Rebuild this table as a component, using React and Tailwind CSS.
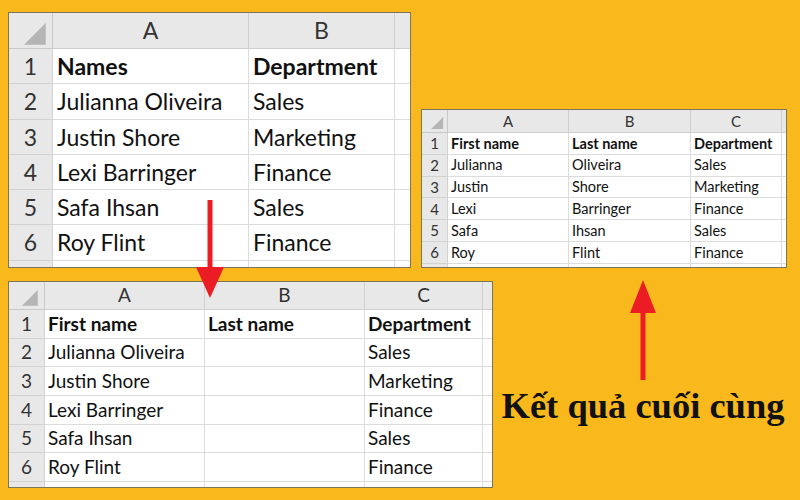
import React from 'react';

// one Excel-like sheet: corner cell, column letters, numbered rows, a sliver of the next row
const Sheet = ({ size, grid, letters, rows, headH, rowH, tailH, text, numText, pad }) => (
  <div className={`shrink-0 bg-white border border-[#7d7558] overflow-hidden ${size}`}
    style={{ fontFamily: 'Lato, "Open Sans", sans-serif' }}>
    <div className={`grid ${grid}`}>
      <div className={`flex items-end justify-end p-[3px] bg-[#e8e8e8] border-r border-b border-[#c9c9c9] ${headH}`}>
        <svg viewBox="0 0 10 10" className="w-[75%] h-[75%]">
          <polygon points="10,0 10,10 0,10" fill="#b5b5b5" />
        </svg>
      </div>
      {letters.map((l, i) => (
        <div key={'h' + i} className={`flex items-center justify-center bg-[#e8e8e8] border-r border-b border-[#cfcfcf] text-[#333] ${headH} ${numText}`}>
          {l}
        </div>
      ))}
      {rows.map((r, ri) => (
        <React.Fragment key={ri}>
          <div className={`flex items-center justify-center bg-[#e8e8e8] border-r border-b border-[#d2d2d2] text-[#333] ${rowH} ${numText}`}>
            {ri + 1}
          </div>
          {r.map((c, ci) => (
            <div key={ci} className={`flex items-center border-r border-b border-[#dcdcdc] text-[#111] whitespace-nowrap ${pad} ${rowH} ${text} ${ri === 0 ? 'font-bold' : ''}`}>
              {c}
            </div>
          ))}
        </React.Fragment>
      ))}
      <div className={`bg-[#e8e8e8] border-r border-[#d2d2d2] ${tailH}`} />
      {letters.map((l, i) => (
        <div key={'t' + i} className={`border-r border-[#dcdcdc] ${tailH}`} />
      ))}
    </div>
  </div>
);

const UpArrow = () => (
  <svg width="30" height="100" viewBox="0 0 30 100" className="shrink-0">
    <rect x="12.5" y="28" width="5" height="72" fill="#ec1c24" />
    <polygon points="15,0 28,33 2,33" fill="#ec1c24" />
  </svg>
);

export default function App() {
  const names = ['Julianna Oliveira', 'Justin Shore', 'Lexi Barringer', 'Safa Ihsan', 'Roy Flint'];
  const depts = ['Sales', 'Marketing', 'Finance', 'Sales', 'Finance'];
  const first = ['Julianna', 'Justin', 'Lexi', 'Safa', 'Roy'];
  const last = ['Oliveira', 'Shore', 'Barringer', 'Ihsan', 'Flint'];

  return (
    <div className="relative flex gap-[10px] w-[800px] h-[500px] pl-[8px] pt-[12px] bg-[#f9b91c] overflow-hidden">
      {/* left: original sheet above, sheet with the new column below */}
      <div className="flex flex-col gap-[13px] w-[403px] shrink-0">
        <Sheet
          size="w-[403px] h-[256px]"
          grid="grid-cols-[44px_196px_146px_17px]"
          letters={['A', 'B', '']}
          rows={[['Names', 'Department', ''], ...names.map((n, i) => [n, depts[i], ''])]}
          headH="h-[36px]"
          rowH="h-[35.3px]"
          tailH="h-[8px]"
          text="text-[23px]"
          numText="text-[23px]"
          pad="pl-[4px]"
        />
        <Sheet
          size="w-[485px] h-[207px]"
          grid="grid-cols-[36px_160px_160px_118px_10px]"
          letters={['A', 'B', 'C', '']}
          rows={[['First name', 'Last name', 'Department', ''], ...names.map((n, i) => [n, '', depts[i], ''])]}
          headH="h-[28px]"
          rowH="h-[28.7px]"
          tailH="h-[6px]"
          text="text-[19px]"
          numText="text-[19px]"
          pad="pl-[3px]"
        />
      </div>

      {/* right: final result */}
      <div className="flex flex-col pt-[97px]">
        <Sheet
          size="w-[366px] h-[159px]"
          grid="grid-cols-[26px_121px_122px_91px_5px]"
          letters={['A', 'B', 'C', '']}
          rows={[['First name', 'Last name', 'Department', ''], ...first.map((n, i) => [n, last[i], depts[i], ''])]}
          headH="h-[23px]"
          rowH="h-[21.8px]"
          tailH="h-[5px]"
          text="text-[14.5px]"
          numText="text-[15px]"
          pad="pl-[3px]"
        />
        <div className="flex flex-col items-center w-[290px] ml-[77px] mt-[12px] gap-[8px]">
          <UpArrow />
          <div className="text-[36.5px] font-bold text-[#111] leading-none whitespace-nowrap"
            style={{ fontFamily: '"Liberation Serif", "DejaVu Serif", serif' }}>
            Kết quả cuối cùng
          </div>
        </div>
      </div>

      {/* arrow from the top sheet down into the bottom one */}
      <svg width="30" height="100" viewBox="0 0 30 100" className="absolute left-[195px] top-[200px]">
        <rect x="12.5" y="0" width="5" height="72" fill="#ec1c24" />
        <polygon points="1,67 29,67 15,98" fill="#ec1c24" />
      </svg>
    </div>
  );
}
